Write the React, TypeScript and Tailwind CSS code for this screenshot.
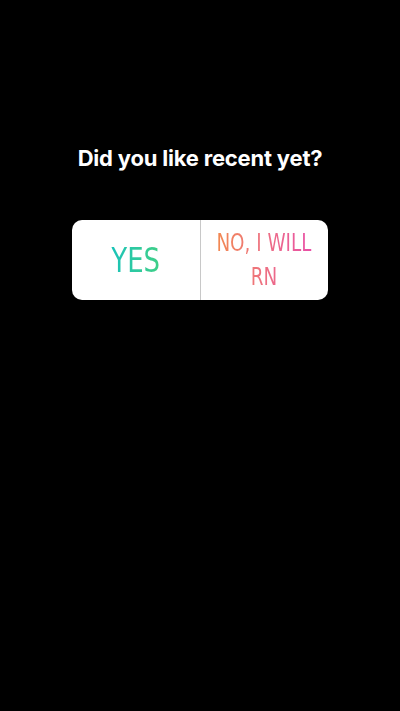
export default function App() {
  return (
    <div className="w-[400px] h-[711px] bg-black flex flex-col items-center">
      <div className="mt-[143px] text-white text-[22px] font-bold leading-[30px] font-['Inter',sans-serif] tracking-[-0.2px]">
        Did you like recent yet?
      </div>
      <div className="mt-[47px] w-[256px] h-[80px] bg-white rounded-[10px] flex">
        <div className="flex-1 flex items-center justify-center border-r border-[#c8c8c8]">
          <span className="font-['DejaVu_Sans_Condensed',sans-serif] text-[34px] leading-none bg-gradient-to-r from-[#18c3b8] to-[#3fcf86] bg-clip-text text-transparent inline-block scale-x-[0.85]">
            YES
          </span>
        </div>
        <div className="flex-1 flex items-center justify-center">
          <span className="font-['DejaVu_Sans_Condensed',sans-serif] text-[24px] leading-[34px] text-center bg-gradient-to-r from-[#f2894f] to-[#e94ea6] bg-clip-text text-transparent inline-block scale-x-[0.85]">
            NO, I WILL<br />RN
          </span>
        </div>
      </div>
    </div>
  );
}
